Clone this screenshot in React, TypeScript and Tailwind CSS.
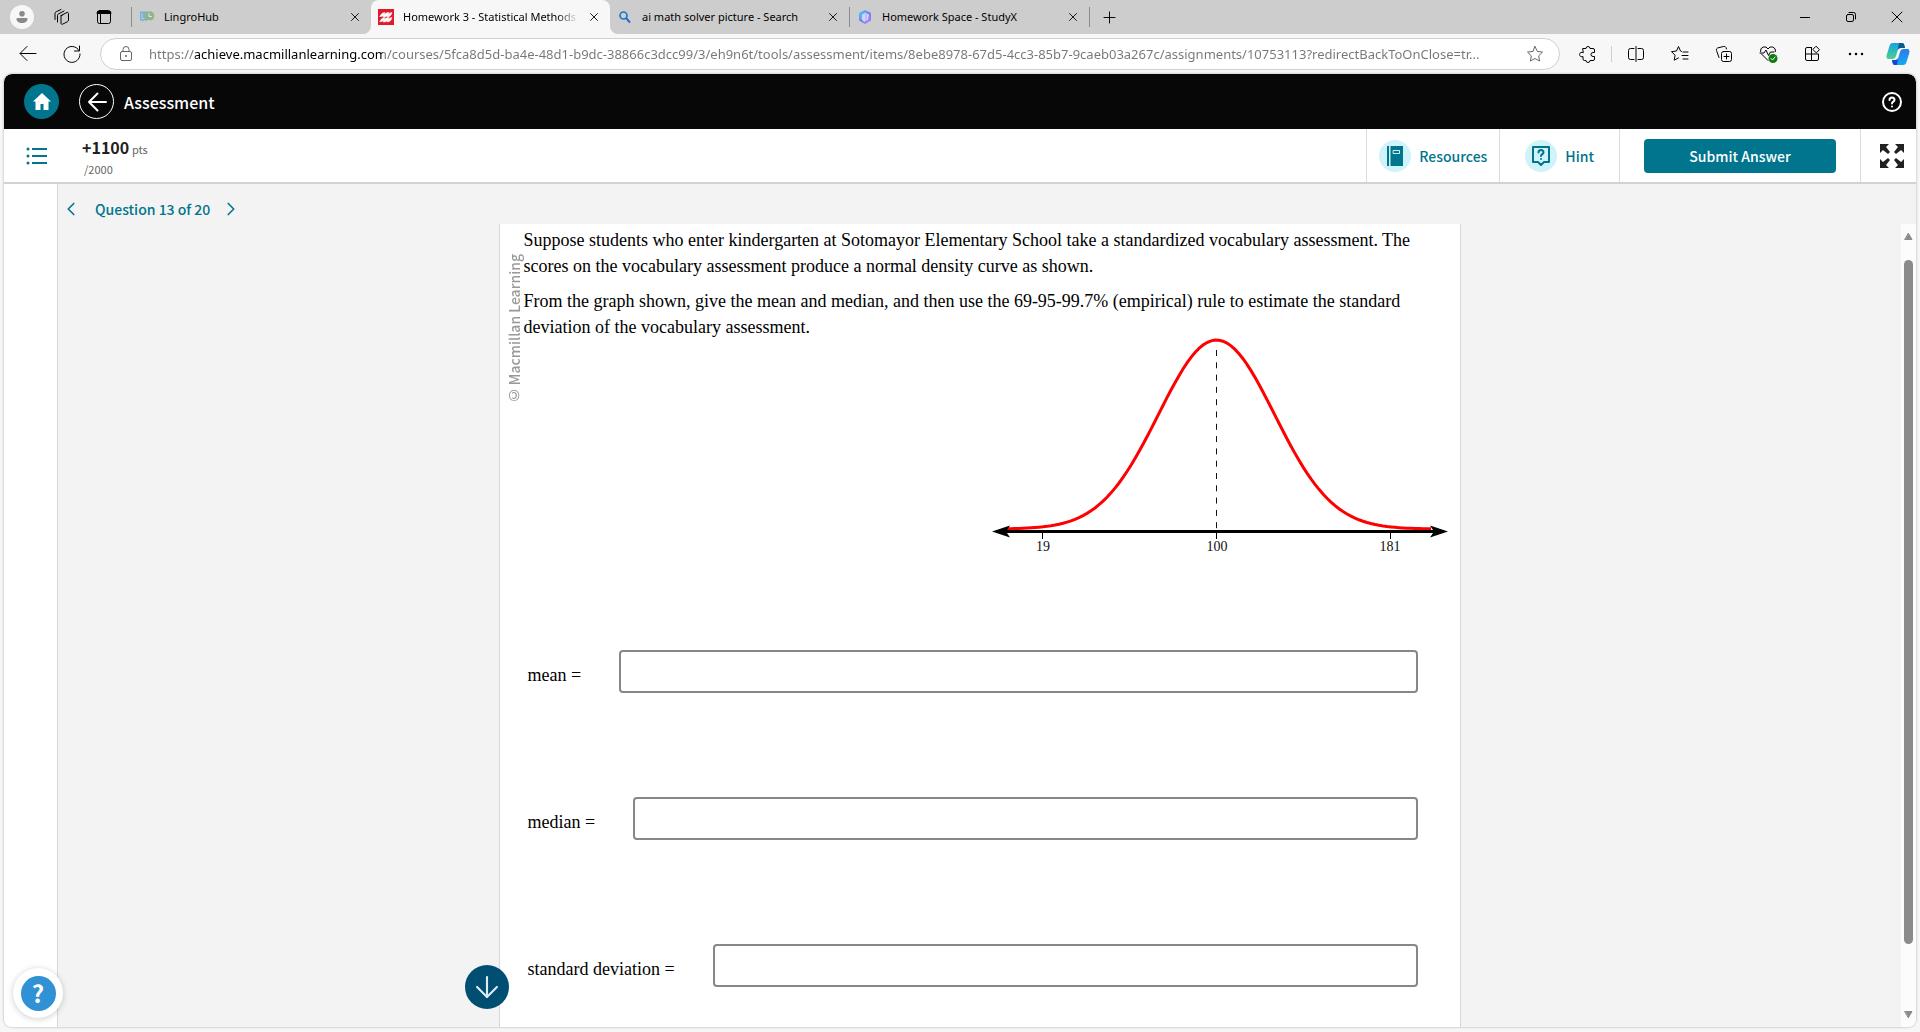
import type { ReactNode } from 'react';
import { ArrowDown, ChevronLeft, ChevronRight, Plus, X } from 'lucide-react';

const appFont = "font-['Noto_Sans_CJK_SC','Noto_Sans',sans-serif]";

const questions = [
  { id: 'mean', label: 'mean =' },
  { id: 'median', label: 'median =' },
  { id: 'deviation', label: 'standard deviation =' },
];

function Icon({ size = 20, className, children }: { size?: number; className?: string; children: ReactNode }) {
  return (
    <svg
      width={size}
      height={size}
      viewBox={`0 0 ${size} ${size}`}
      fill="none"
      stroke="currentColor"
      strokeLinecap="round"
      strokeLinejoin="round"
      className={className}
      aria-hidden="true"
    >
      {children}
    </svg>
  );
}

function LingroIcon() {
  return (
    <Icon size={16}>
      <path d="M1 2.500h7v9H4.500l-1 2v-2H1z" fill="#7fb0cf" stroke="none" />
      <path d="M3 4.500v5h2" stroke="#b9d3df" />
      <circle cx="10.500" cy="7" r="4.800" fill="#91b387" stroke="none" />
      <path d="M9 11l.5 3.500L12 11.500z" fill="#c5d2e4" stroke="none" />
      <path d="M10 4.500v3h2.500" stroke="#dfe9d8" />
    </Icon>
  );
}

function MacmillanIcon() {
  return (
    <Icon size={16}>
      <path d="M0 0h16v16H0z" fill="#e01a2c" stroke="none" />
      <path
        d="M2 7.500C3 5 4.500 3.500 7 3.500L6 6c1.500-2 3-2.500 5-2.500L10 6c1-1.500 2-2.500 4-2.500-.500 2.500-2 4.500-5 4.500l1-2C9 7.500 7.500 8 5 8l1-2C5 7 4 7.500 2 7.500z"
        fill="#fff"
        stroke="#fff"
        strokeWidth="0.500"
      />
      <path
        d="M2 12.500c1-2.500 2.500-4 5-4L6 11c1.500-2 3-2.500 5-2.500L10 11c1-1.500 2-2.500 4-2.500-.500 2.500-2 4.500-5 4.500l1-2c-1 1.500-2.500 2-5 2l1-2c-1 1-2 1.500-4 1.500z"
        fill="#fff"
        stroke="#fff"
        strokeWidth="0.500"
      />
    </Icon>
  );
}

function SearchIcon() {
  return (
    <Icon size={16}>
      <circle cx="6.500" cy="6.500" r="3.500" stroke="#1a73c9" strokeWidth="1.600" />
      <path d="M9.500 9.500l3 3.500" stroke="#1a73c9" strokeWidth="2" />
    </Icon>
  );
}

function StudyIcon() {
  return (
    <Icon size={16}>
      <defs>
        <linearGradient id="study" x1="0" y1="0" x2="1" y2="1">
          <stop offset="0" stopColor="#41e0f2" />
          <stop offset="0.500" stopColor="#6b7cf5" />
          <stop offset="1" stopColor="#c77dfa" />
        </linearGradient>
      </defs>
      <path d="M8 1l6 3v7.500L8 15l-6-3.500V4z" fill="url(#study)" stroke="none" />
      <path d="M8.500 3.500L12 5.500 11 11l-4 2-2.500-3L5 5.500z" fill="#cfd6fb" stroke="none" />
      <path d="M9 4v8" stroke="#a9a5f7" />
    </Icon>
  );
}

function Tab({ title, icon, active = false }: { title: string; icon: ReactNode; active?: boolean }) {
  return (
    <div className={`flex h-full w-[239px] items-center pl-[7px] pr-2 ${active ? 'rounded-t-lg bg-[#f7f7f7]' : ''}`}>
      {icon}
      <span
        className={`ml-[9px] flex-1 overflow-hidden whitespace-nowrap text-[11px] leading-4 ${
          active ? '[mask-image:linear-gradient(to_right,black_88%,transparent)]' : ''
        }`}
      >
        {title}
      </span>
      <button aria-label={`Close ${title}`} className="ml-2 flex w-4 justify-center">
        <X size={14} strokeWidth={1.5} />
      </button>
    </div>
  );
}

function TabStrip() {
  return (
    <div className="flex h-[34px] bg-[#f7f7f7]">
      <div className="flex items-center rounded-br-lg bg-[#cdcdcd] pl-[10px]">
        <button aria-label="Profile" className="flex size-6 items-center justify-center rounded-full bg-[#f7f7f7]">
          <Icon size={12}>
            <circle cx="6" cy="2.800" r="2.800" fill="#8a8a8a" stroke="none" />
            <path d="M1.500 7h9a1 1 0 011 1c0 2.500-2.500 4-5.500 4S.5 10.500.5 8a1 1 0 011-1z" fill="#8a8a8a" stroke="none" />
          </Icon>
        </button>
        <button aria-label="Workspaces" className="ml-[18px]">
          <Icon>
            <path d="M3 12.500V6.500a2 2 0 011.300-1.800L9 2.500M5.500 15V8.500a2 2 0 011.300-1.800L12 4" />
            <path d="M9 8.500l6-3a1 1 0 011.500 1v6.500a2 2 0 01-1 1.700l-5 2.500a1 1 0 01-1.500-1V9.500a2 2 0 011-1z" />
          </Icon>
        </button>
        <button aria-label="Tab actions" className="ml-[22px]">
          <Icon>
            <rect x="3.500" y="3.500" width="13" height="13" rx="2" />
            <path d="M3.500 6h13M4 5h12" strokeWidth="2" />
            <path d="M6.500 7v9" />
          </Icon>
        </button>
        <span className="ml-[17px] h-5 w-px bg-[#8c8c8c]" />
        <Tab title="LingroHub" icon={<LingroIcon />} />
      </div>
      <div className="bg-[#cdcdcd]">
        <Tab title="Homework 3 - Statistical Methods" icon={<MacmillanIcon />} active />
      </div>
      <div className="flex flex-1 items-center rounded-bl-lg bg-[#cdcdcd]">
        <Tab title="ai math solver picture - Search" icon={<SearchIcon />} />
        <span className="h-5 w-px bg-[#8c8c8c]" />
        <Tab title="Homework Space - StudyX" icon={<StudyIcon />} />
        <span className="h-5 w-px bg-[#8c8c8c]" />
        <button aria-label="New tab" className="ml-[10px]">
          <Plus size={19} strokeWidth={1.2} />
        </button>
        <div className="ml-auto flex">
          <button aria-label="Minimize" className="flex w-[46px] justify-center">
            <Icon size={12}>
              <path d="M1 6.500h10" strokeLinecap="butt" />
            </Icon>
          </button>
          <button aria-label="Restore" className="flex w-[46px] justify-center">
            <Icon size={12}>
              <rect x="1.500" y="3.500" width="7" height="7" rx="1.500" />
              <path d="M4 1.500h4.500a2 2 0 012 2V8" />
            </Icon>
          </button>
          <button aria-label="Close window" className="flex w-[46px] justify-center">
            <Icon size={12}>
              <path d="M1 1l10 10M11 1L1 11" />
            </Icon>
          </button>
        </div>
      </div>
    </div>
  );
}

function Toolbar() {
  return (
    <div className="flex h-10 items-center bg-[#f7f7f7] pr-[10px]">
      <button aria-label="Back" className="ml-[18px]">
        <Icon>
          <path d="M18 9.500H2.500M9 2.500l-7 7 7 7" />
        </Icon>
      </button>
      <button aria-label="Refresh" className="ml-6">
        <Icon>
          <path d="M17 6.500A8 8 0 1018 10M17.500 2v5h-5" />
        </Icon>
      </button>
      <div className="ml-[18px] flex h-8 flex-1 items-center rounded-full border border-[#cfcfcf] bg-white pl-4 pr-[14px]">
        <Icon size={18} className="shrink-0 text-[#666]">
          <rect x="3.500" y="6.500" width="11" height="9" rx="1.500" />
          <path d="M6 6.500V4.500a3 3 0 016 0v2" />
          <circle cx="9" cy="11" r="1" fill="currentColor" stroke="none" />
        </Icon>
        <input
          aria-label="Address"
          readOnly
          value="https://achieve.macmillanlearning.com/courses/5fca8d5d-ba4e-48d1-b9dc-38866c3dcc99/3/eh9n6t/tools/assessment/items/8ebe8978-67d5-4cc3-85b7-9caeb03a267c/assignments/10753113?redirectBackToOnClose=tr..."
          className="ml-[14px] min-w-0 flex-1 bg-[linear-gradient(to_right,#767676_46px,#000_46px,#000_234px,#767676_234px)] bg-clip-text text-[13px] leading-5 text-transparent outline-none"
        />
        <button aria-label="Add to favorites" className="text-[#666]">
          <Icon>
            <path d="M10 2.500l2.300 4.900 5.200.700-3.800 3.700.900 5.200-4.600-2.500L5.400 17l.9-5.200L2.500 8.100l5.200-.7z" />
          </Icon>
        </button>
      </div>
      <button aria-label="Extensions" className="ml-[18px]">
        <Icon>
          <path d="M5 4.500h3a2 2 0 114 0h3a1.500 1.500 0 011.500 1.500v2.500h-1.500a2 2 0 100 4h1.500V15a1.500 1.500 0 01-1.500 1.500h-3a2 2 0 11-4 0H6.500A1.500 1.500 0 015 15v-2.500a2.300 2.300 0 110-4z" />
        </Icon>
      </button>
      <span className="ml-[13px] h-4 w-px bg-[#cfcfcf]" />
      <div className="ml-[14px] flex gap-6">
        <button aria-label="Split screen">
          <Icon>
            <path d="M8 4.500H4.500a2 2 0 00-2 2v7a2 2 0 002 2H8M12 4.500h3.500a2 2 0 012 2v7a2 2 0 01-2 2H12M10 2.500v15" />
          </Icon>
        </button>
        <button aria-label="Favorites">
          <Icon>
            <path d="M11.500 7.500L10.500 7 8.500 2.500l-2 4.500-5 .700 3.600 3.500-.900 5 4.300-2.300M13 8h5M12 11.500h6M13 15h5" />
          </Icon>
        </button>
        <button aria-label="Collections">
          <Icon>
            <rect x="7.500" y="7.500" width="10" height="10" rx="2" />
            <path d="M12.500 10v5M10 12.500h5M5 13.500l-2.500-7a2 2 0 011-2.500l6-1.500a2 2 0 012.500 1l.5 1.500" />
          </Icon>
        </button>
        <button aria-label="Browser essentials">
          <Icon>
            <path d="M10 16.500L3.500 10M2.500 7.500A4 4 0 0110 5a4 4 0 017.500 2.500M2 9h4l2-3 2.500 5.500L12.500 8H16" />
            <circle cx="15" cy="14.500" r="4.500" fill="#107c10" stroke="none" />
            <path d="M13 14.500l1.500 1.500 2.500-3" stroke="#fff" />
          </Icon>
        </button>
        <button aria-label="Apps">
          <Icon>
            <path d="M9.500 3.500H5a1.500 1.500 0 00-1.500 1.500v10A1.500 1.500 0 005 16.500h10a1.500 1.500 0 001.500-1.500v-5h-13M9.500 3.500v13" />
            <path d="M14.300 2.500l3.200 3.200-3.200 3.200-3.200-3.200z" />
          </Icon>
        </button>
        <button aria-label="Settings and more">
          <Icon>
            <path d="M4 10h.01M10 10h.01M16 10h.01" strokeWidth="2.500" />
          </Icon>
        </button>
      </div>
      <button aria-label="Copilot" className="ml-5">
        <Icon size={24}>
          <defs>
            <linearGradient id="copilotLeft" x1="0" y1="0" x2="0" y2="1">
              <stop offset="0" stopColor="#0fa3e6" />
              <stop offset="1" stopColor="#4fd08b" />
            </linearGradient>
            <linearGradient id="copilotRight" x1="0" y1="0" x2="0" y2="1">
              <stop offset="0" stopColor="#2b7de8" />
              <stop offset="1" stopColor="#16a9f2" />
            </linearGradient>
          </defs>
          <path d="M7 1h9c2 0 2.500 2 3 5h-4c-2 0-3 1-3.500 3L10 14c-.500 2-1.500 3-4 3H3c-2.500 0-3-2-2-5L3.500 4C4 2 5 1 7 1z" fill="url(#copilotLeft)" stroke="none" />
          <path d="M13 1h3c2 0 2.500 2 3 5h-4c-2 0-3 1-3.500 2.500z" fill="#0b5a8a" stroke="none" />
          <path d="M17 23H9c-2 0-2.500-2-3-5h3c2 0 3-1 3.500-3L14 10c.500-2 1.500-3 4-3h3c2.500 0 3 2 2 5l-2.500 8c-.500 2-1.500 3-3.500 3z" fill="url(#copilotRight)" stroke="none" />
          <path d="M6 18h3c1.500 0 2.500-.500 3-2l-1 7H9c-2 0-2.500-2-3-5z" fill="#1546d2" stroke="none" />
        </Icon>
      </button>
    </div>
  );
}

function AppHeader() {
  return (
    <header className="flex h-[55px] shrink-0 items-center rounded-t-lg bg-[#070707] px-5 text-white">
      <a href="#home" aria-label="Home" className="flex size-[35px] items-center justify-center rounded-full bg-[#00758d]">
        <Icon>
          <path d="M10 1L1 9.500h2.500V18h5v-6h3v6h5V9.500H19z" fill="#fff" stroke="none" />
        </Icon>
      </a>
      <a href="#back" aria-label="Back to course" className="ml-5 flex size-[35px] items-center justify-center rounded-full border border-white">
        <Icon>
          <path d="M19 10H2M10.500 1.500L2 10l8.500 8.500" strokeWidth="2" />
        </Icon>
      </a>
      <h1 className="ml-[10px] text-base font-medium">Assessment</h1>
      <button aria-label="Help" className="ml-auto -mr-[6px]">
        <Icon>
          <circle cx="10" cy="10" r="9" strokeWidth="2" />
          <path d="M7.500 8a2.500 2.500 0 115 0c0 1.500-2.500 1.800-2.500 3.500M10 14.500v.01" strokeWidth="2" />
        </Icon>
      </button>
    </header>
  );
}

function ActionBar() {
  return (
    <div className="flex h-[55px] shrink-0 items-stretch border-b-2 border-[#d2d2d2] bg-white">
      <button aria-label="Question list" className="ml-[22px] flex items-center text-[#00758d]">
        <Icon size={22}>
          <path d="M6 4h15M6 11h15M6 18h15" strokeWidth="2" strokeLinecap="butt" />
          <path d="M2 4h.01M2 11h.01M2 18h.01" strokeWidth="3" />
        </Icon>
      </button>
      <div className="ml-[34px] flex flex-col justify-center pt-1">
        <p className="text-xs leading-5 text-[#666]">
          <span className="text-base leading-5 font-bold text-[#1f1f1f]">+1100</span>{' '}
          <span className="text-[11px]">pts</span>
        </p>
        <p className="pl-[2px] text-[11px] leading-5 text-[#666]">/2000</p>
      </div>
      <button className="ml-auto flex items-center gap-2 border-l border-[#dcdcdc] px-3 text-sm font-medium text-[#00758d]">
        <span className="flex size-8 items-center justify-center rounded-full bg-[#cff3f8]">
          <Icon>
            <path d="M2 0h2v20H2zM5.500 0H18v20H5.500z" fill="currentColor" stroke="none" />
            <path d="M8.500 4.500h6v3h-6z" stroke="#cff3f8" />
          </Icon>
        </span>
        Resources
      </button>
      <button className="flex items-center gap-2 border-l border-[#dcdcdc] px-[25px] text-sm font-medium text-[#00758d]">
        <span className="flex size-8 items-center justify-center rounded-full bg-[#cff3f8]">
          <Icon>
            <path d="M2 1h16v15h-5l-3 3-3-3H2z" strokeWidth="2" />
            <path d="M7.500 6.500a2.500 2.500 0 115 0c0 1.500-2.500 1.800-2.500 3.500M10 13v.01" strokeWidth="2" />
          </Icon>
        </span>
        Hint
      </button>
      <div className="flex items-center border-l border-[#dcdcdc] px-6">
        <button className="h-[34px] w-48 rounded bg-[#00758d] text-sm font-medium text-white">Submit Answer</button>
      </div>
      <button aria-label="Full screen" className="flex items-center border-l border-[#dcdcdc] pl-[19px] pr-3 text-[#222]">
        <Icon size={24}>
          <path
            d="M0 0h9L6 3l4 5-2 2-5-4-3 3zM24 0v9l-3-3-5 4-2-2 4-5-3-3zM0 24v-9l3 3 5-4 2 2-4 5 3 3zM24 24h-9l3-3-4-5 2-2 5 4 3-3z"
            fill="currentColor"
            stroke="none"
          />
        </Icon>
      </button>
    </div>
  );
}

const SIGMA = 58;
const MEAN_X = 224.5;
const curve = Array.from({ length: 107 }, (_, i) => {
  const x = 15 + i * 4;
  const y = 199 - 189 * Math.exp(-((x - MEAN_X) ** 2) / (2 * SIGMA ** 2));
  return `${i === 0 ? 'M' : 'L'}${x} ${y.toFixed(2)}`;
}).join('');

function DensityCurve() {
  return (
    <svg width="456" height="226" viewBox="0 0 456 226" role="img" aria-label="Normal density curve">
      <path d="M224.500 20v180" stroke="#111" strokeDasharray="6 6.300" />
      <path d={curve} fill="none" stroke="#fe0000" strokeWidth="3" />
      <path d="M10 201.500h436" stroke="#000" strokeWidth="3" />
      <path d="M0 201.500l18-6-4 6 4 6zM456 201.500l-18-6 4 6-4 6z" fill="#000" />
      <path d="M50.500 201v8M224.500 201v8M398.500 201v8" stroke="#000" />
      <g className="font-['Liberation_Serif',serif] text-[14px]" fill="#111" textAnchor="middle">
        <text x="51" y="221">19</text>
        <text x="225" y="221">100</text>
        <text x="398" y="221">181</text>
      </g>
    </svg>
  );
}

function QuestionCard() {
  return (
    <section className="relative w-full max-w-[962px] border-x border-[#d8d8d8] bg-white">
      <p className="absolute left-[6px] top-[30px] rotate-180 text-sm leading-4 font-medium text-[#999] [writing-mode:vertical-rl]">
        © Macmillan Learning
      </p>
      <div className="pl-6 pr-3 pt-[3px] font-['Liberation_Serif',serif] text-lg leading-[26px] text-black">
        <div className="max-w-[900px] space-y-[9px]">
          <p>
            Suppose students who enter kindergarten at Sotomayor Elementary School take a standardized vocabulary
            assessment. The scores on the vocabulary assessment produce a normal density curve as shown.
          </p>
          <p>
            From the graph shown, give the mean and median, and then use the 69-95-99.7% (empirical) rule to estimate the
            standard deviation of the vocabulary assessment.
          </p>
        </div>
        <div className="-mt-[10px] flex justify-end">
          <DensityCurve />
        </div>
        <div className="mt-[94px] space-y-[104px] pl-1 pr-[30px] pb-9">
          {questions.map(({ id, label }) => (
            <div key={id} className="flex items-center gap-[38px]">
              <label htmlFor={id} className="pt-[7px]">
                {label}
              </label>
              <input
                id={id}
                type="text"
                className="h-[43px] min-w-0 flex-1 rounded border-2 border-[#878787] bg-white px-3 outline-none"
              />
            </div>
          ))}
        </div>
      </div>
      <button
        aria-label="Scroll down"
        className="absolute -left-[35px] bottom-[18px] flex size-11 items-center justify-center rounded-full bg-[#004e72] text-[#dcebf5]"
      >
        <ArrowDown size={34} strokeWidth={1.5} />
      </button>
    </section>
  );
}

export default function App() {
  return (
    <div className="flex h-screen flex-col bg-[#f7f7f7] font-['Noto_Sans',sans-serif] text-black">
      <TabStrip />
      <Toolbar />
      <div
        className={`relative mx-1 mb-[5px] flex min-h-0 flex-1 flex-col overflow-hidden rounded-lg bg-[#f3f3f3] shadow-[0_0_2px_1px_#d4d4d4] ${appFont}`}
      >
        <AppHeader />
        <ActionBar />
        <div className="flex min-h-0 flex-1">
          <aside className="w-[54px] shrink-0 border-r border-[#d8d8d8] bg-white" />
          <main className="flex min-w-0 flex-1 flex-col">
            <nav className="flex h-10 shrink-0 items-center pt-[10px] text-sm font-medium text-[#00758d]">
              <button aria-label="Previous question" className="ml-[2px]">
                <ChevronLeft size={22} strokeWidth={1.8} />
              </button>
              <span className="ml-[13px] mr-[10px]">Question 13 of 20</span>
              <button aria-label="Next question">
                <ChevronRight size={22} strokeWidth={1.8} />
              </button>
            </nav>
            <div className="flex min-h-0 flex-1">
              <div className="flex flex-1 justify-center">
                <QuestionCard />
              </div>
              <div className="flex w-[15px] flex-col items-center bg-[#fcfcfc] py-2">
                <Icon size={9}>
                  <path d="M4.500 1.500L8 7.500H1z" fill="#8b8b8b" stroke="#8b8b8b" />
                </Icon>
                <div className="mt-[19px] w-[9px] flex-1 rounded-full bg-[#8b8b8b]" />
                <Icon size={9} className="mt-[66px]">
                  <path d="M4.500 7.500L8 1.500H1z" fill="#8b8b8b" stroke="#8b8b8b" />
                </Icon>
              </div>
            </div>
          </main>
        </div>
        <button
          aria-label="Support"
          className="absolute bottom-[9px] left-[9px] flex size-[50px] items-center justify-center rounded-full bg-white shadow-[0_1px_6px_rgba(0,0,0,0.2)]"
        >
          <span className="flex size-[35px] items-center justify-center rounded-full bg-[#3091d4] text-2xl font-bold text-white">
            ?
          </span>
        </button>
      </div>
    </div>
  );
}
